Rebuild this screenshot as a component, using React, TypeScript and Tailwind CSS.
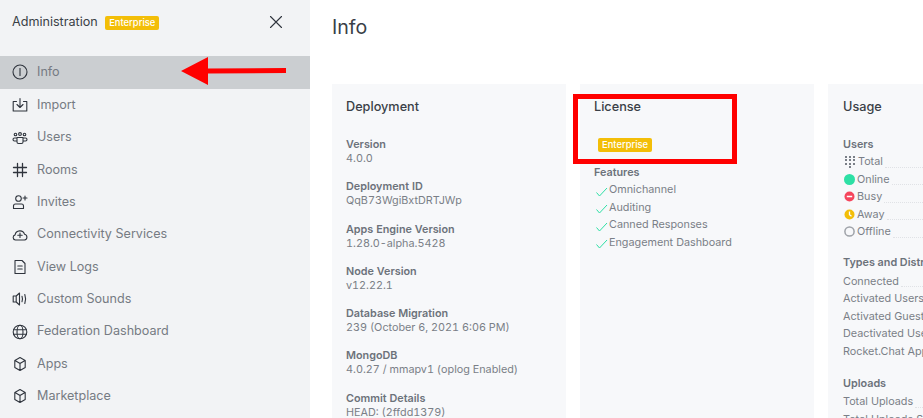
import React from "react";

const S = ({ children }: { children: React.ReactNode }) => (
  <svg width="16" height="16" viewBox="0 0 16 16" fill="none" stroke="#2f343d" strokeWidth="1.1" strokeLinecap="round" strokeLinejoin="round" className="shrink-0">
    {children}
  </svg>
);

const Cube = () => (
  <S>
    <path d="M8 1.600 13.200 4.400v7L8 14.400 2.800 11.400v-7zM3 4.600 8 7.400l5-2.800M8 7.400v6.800" />
  </S>
);

const nav: { label: string; icon: React.ReactNode }[] = [
  { label: "Import", icon: <S><path d="M4.500 4.500H1.200V14h13.600V4.500h-3.300M8 1.500v8.500M5 7.500l3 3 3-3" /></S> },
  { label: "Users", icon: <S><circle cx="8" cy="4" r="1.400" /><circle cx="3.500" cy="4.500" r="1.300" /><circle cx="12.500" cy="4.500" r="1.300" /><path d="M5 7.500h6v4.500q0 1.500-1.500 1.500h-3Q5 13.500 5 12zM5 11H2.500Q1 11 1 9.500 1 8 2.500 8H5M11 11h2.500Q15 11 15 9.500 15 8 13.500 8H11" /></S> },
  { label: "Rooms", icon: <S><path d="M5.500 1.500v13M10.500 1.500v13M1.500 5.500h13M1.500 10.500h13" strokeWidth="1.300" /></S> },
  { label: "Invites", icon: <S><circle cx="6.500" cy="4.500" r="2.800" /><path d="M1.500 14.500v-2.500q0-2 2-2h6q2 0 2 2v2.500zM13 2v4M11 4h4" /></S> },
  { label: "Connectivity Services", icon: <S><path d="M4 13H3.500a2.600 2.600 0 0 1-.4-5.100 4.900 4.900 0 0 1 9.500-.6A2.900 2.900 0 0 1 12.500 13zM8 6v4.500M5.800 8.200h4.400" /></S> },
  { label: "View Logs", icon: <S><path d="M3 1.500h7l3 3v10H3zM5.800 7h4.400M5.800 10h4.400" /></S> },
  { label: "Custom Sounds", icon: <S><path d="M1.200 5h3L7.500 2v12L4.200 11h-3zM4.200 5v6M10 5.200q1 2.800 0 5.600M12.800 3.500q1.600 4.500 0 9" /></S> },
  { label: "Federation Dashboard", icon: <S><circle cx="8" cy="8" r="6.800" /><ellipse cx="8" cy="8" rx="3" ry="6.800" /><path d="M1.500 5.800h13M1.500 10.200h13" /></S> },
  { label: "Apps", icon: <Cube /> },
  { label: "Marketplace", icon: <Cube /> },
];

const Badge = () => (
  <span className="flex items-center h-[14px] px-[4px] rounded-[2px] bg-[#f3be08] text-white text-[9.400px] font-medium leading-none">
    Enterprise
  </span>
);

const deployment = [
  ["Version", "4.0.0"],
  ["Deployment ID", "QqB73WgiBxtDRTJWp"],
  ["Apps Engine Version", "1.28.0-alpha.5428"],
  ["Node Version", "v12.22.1"],
  ["Database Migration", "239 (October 6, 2021 6:06 PM)"],
  ["MongoDB", "4.0.27 / mmapv1 (oplog Enabled)"],
  ["Commit Details", "HEAD: (2ffdd1379)"],
];

const features = ["Omnichannel", "Auditing", "Canned Responses", "Engagement Dashboard"];

const Row = ({ icon, label }: { icon?: React.ReactNode; label: string }) => (
  <div className="flex items-end h-[17.500px] text-[10.800px] leading-[17.500px] text-[#7a7f87]">
    {icon}
    <span className="whitespace-nowrap">{label}</span>
    <span className="flex-1 ml-[2px] mb-[3px] border-b border-dotted border-[#e0e2e6]" />
  </div>
);

const TotalIcon = () => (
  <span className="w-[10px] h-[13px] ml-[2px] mr-[3px] grid grid-cols-3 gap-[1.500px] shrink-0 self-center content-start">
    {Array.from({ length: 10 }).map((_, i) => (
      <span key={i} className={`w-[2px] h-[2px] bg-[#7a7f87] ${i === 9 ? "col-start-2" : ""}`} />
    ))}
  </span>
);

const Dot = ({ children }: { children: React.ReactNode }) => (
  <svg width="13" height="13" viewBox="0 0 13 13" className="shrink-0 mr-[1px] self-center -mt-[1px]">{children}</svg>
);

export default function App() {
  return (
    <div className="flex w-[923px] h-[418px] overflow-hidden bg-white font-['Inter',sans-serif] relative">
      <aside className="w-[310px] shrink-0 bg-[#f2f3f5] flex flex-col">
        <div className="h-[56px] flex items-start pt-[14px] pl-[12px] pr-[27px]">
          <span className="text-[12.600px] leading-[16px] text-[#3a3f47]">Administration</span>
          <span className="ml-[7.500px] mt-[2px]"><Badge /></span>
          <svg width="14" height="14" viewBox="0 0 14 14" className="ml-auto mt-[1px]" stroke="#2f343d" strokeWidth="1.100" strokeLinecap="round">
            <path d="M1.500 1.500l11 11M12.500 1.500l-11 11" />
          </svg>
        </div>
        <div className="h-[33px] bg-[#cbced1] flex items-center pb-[1px] pl-[12px] gap-[9px] text-[12.600px] text-[#767b83]">
          <S><circle cx="8" cy="8" r="7" /><path d="M8 4.500v7" /></S>
          <span>Info</span>
        </div>
        <nav className="pt-[0.250px]">
          {nav.map((n) => (
            <div key={n.label} className="h-[32.330px] flex items-center pl-[12px] gap-[9px] text-[12.600px] text-[#767b83]">
              {n.icon}
              <span>{n.label}</span>
            </div>
          ))}
        </nav>
      </aside>

      <main className="flex-1 min-w-0 pl-[22px] overflow-hidden">
        <h1 className="h-[84px] pt-[14px] text-[19.600px] leading-[26px] text-[#3a3f47]">Info</h1>
        <div className="flex gap-[14px] w-[730px]">
          <section className="w-[234px] h-[400px] bg-[#f7f8fa] px-[14px] pt-[14px] shrink-0">
            <h2 className="text-[12.700px] leading-[18px] font-medium text-[#3a3f47] mb-[22px]">Deployment</h2>
            {deployment.map(([a, b]) => (
              <div key={a} className="h-[42.300px] text-[10.800px] leading-[14px] whitespace-nowrap tabular-nums">
                <div className="font-semibold text-[#6c727a]">{a}</div>
                <div className="text-[#7a7f87]">{b}</div>
              </div>
            ))}
          </section>

          <section className="w-[234px] h-[400px] bg-[#f7f8fa] px-[14px] pt-[14px] shrink-0">
            <h2 className="text-[12.700px] leading-[18px] font-medium text-[#3a3f47]">License</h2>
            <div className="mt-[19px] ml-[4px] h-[19px] flex items-center"><Badge /></div>
            <div className="mt-[12px] text-[10.800px] leading-[14px] font-semibold text-[#6c727a]">Features</div>
            <div className="mt-[1.600px]">
              {features.map((f) => (
                <div key={f} className="flex items-center h-[17.500px] text-[10.800px] text-[#7a7f87] whitespace-nowrap">
                  <svg width="13" height="13" viewBox="0 0 13 13" fill="none" stroke="#2de0a5" strokeWidth="1" className="ml-[1px] mr-[1px] mt-[2px]"><path d="M1.500 7.500l3 3.500 7.500-8" /></svg>
                  {f}
                </div>
              ))}
            </div>
          </section>

          <section className="w-[234px] h-[400px] bg-[#f7f8fa] px-[15px] pt-[14px] shrink-0">
            <h2 className="text-[12.700px] leading-[18px] font-medium text-[#3a3f47] mb-[22px]">Usage</h2>
            <div className="text-[10.800px] leading-[14px] font-semibold text-[#6c727a] mb-[1.400px]">Users</div>
            <Row icon={<TotalIcon />} label="Total" />
            <Row icon={<Dot><circle cx="6.500" cy="6.500" r="5.500" fill="#2de0a5" /></Dot>} label="Online" />
            <Row icon={<Dot><circle cx="6.500" cy="6.500" r="5" fill="#f5455c" /><path d="M3.800 6.500h5.400" stroke="#fff" strokeWidth="1.500" /></Dot>} label="Busy" />
            <Row icon={<Dot><circle cx="6.500" cy="6.500" r="5" fill="#f3be08" /><path d="M6.500 3.500v3.200l2 1.500" stroke="#fff" fill="none" strokeWidth="1.300" /></Dot>} label="Away" />
            <Row icon={<Dot><circle cx="6.500" cy="6.500" r="4.600" fill="none" stroke="#9ea2a8" strokeWidth="1.500" /></Dot>} label="Offline" />
            <div className="mt-[15.600px] text-[10.800px] leading-[14px] font-semibold text-[#6c727a] whitespace-nowrap mb-[2.400px]">Types and Distribution</div>
            <Row label="Connected" />
            <Row label="Activated Users" />
            <Row label="Activated Guests" />
            <Row label="Deactivated Users" />
            <Row label="Rocket.Chat App Users" />
            <div className="mt-[16.600px] text-[10.800px] leading-[14px] font-semibold text-[#6c727a] mb-[2.400px]">Uploads</div>
            <Row label="Total Uploads" />
            <Row label="Total Uploads Size" />
          </section>
        </div>
      </main>

      <div className="absolute left-[573px] top-[94px] w-[164px] h-[70px] border-[5px] border-[#ff0000]" />
      <svg className="absolute left-[180px] top-[56px]" width="108" height="30" viewBox="0 0 108 30">
        <polygon points="1,15 28,1 28,12.500 106,12 106,17 28,17.500 28,29" fill="#ff0000" />
      </svg>
    </div>
  );
}
